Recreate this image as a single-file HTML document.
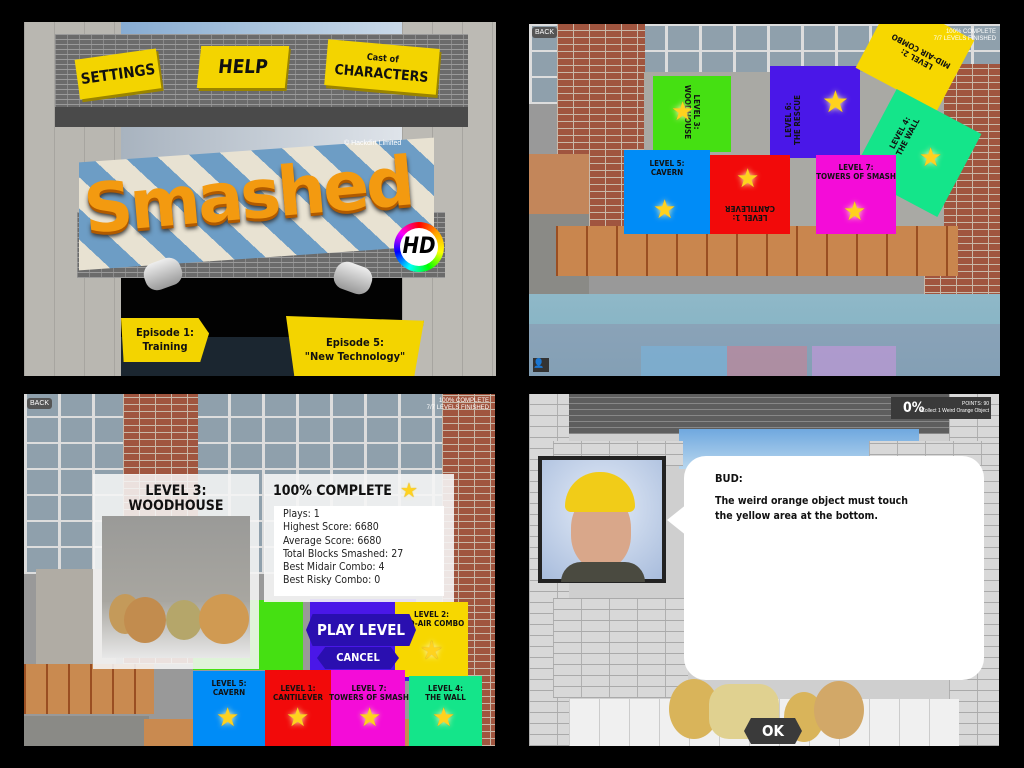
<!DOCTYPE html>
<html><head><meta charset="utf-8"><style>
*{margin:0;padding:0;box-sizing:border-box}
body{width:1024px;height:768px;background:#000;position:relative;overflow:hidden;font-family:"Liberation Sans",sans-serif}
.p{position:absolute;overflow:hidden}
.a{position:absolute}
.c{font-family:"DejaVu Sans Condensed","DejaVu Sans",sans-serif;font-weight:bold}
.brick{background-color:#6b6b6b;background-image:repeating-linear-gradient(0deg,#9a9a9a 0 1px,transparent 1px 5px),repeating-linear-gradient(90deg,#8a8a8a 0 1px,transparent 1px 12px)}
.rbrick{background-color:#a0553f;background-image:repeating-linear-gradient(0deg,#c9b8a8 0 1px,transparent 1px 7px),repeating-linear-gradient(90deg,#c9b8a8 0 1px,transparent 1px 16px)}
.wbrick{background-color:#d8d8d8;background-image:repeating-linear-gradient(0deg,#aaa 0 1px,transparent 1px 11px),repeating-linear-gradient(90deg,#b0b0b0 0 1px,transparent 1px 28px)}
.ys{background:#f3d400;color:#111;text-align:center;box-shadow:2px 3px 0 #9a8400;white-space:nowrap}
.blk{position:absolute;font-family:"DejaVu Sans Condensed","DejaVu Sans",sans-serif;font-weight:bold;font-size:8px;color:#111;text-align:center;line-height:9px;white-space:nowrap}
.star{position:absolute;color:#ffd21e;font-size:26px;line-height:26px;text-shadow:0 0 6px #fff8b0,0 0 1px #a06800}
.win{background-color:#8fa0ac;background-image:repeating-linear-gradient(90deg,#ddd 0 3px,transparent 3px 34px),repeating-linear-gradient(0deg,#ddd 0 2px,transparent 2px 26px)}
</style></head><body>

<!-- TOP LEFT -->
<div class="p" style="left:24px;top:22px;width:472px;height:354px;background:#7fa6c8">
  <div class="a" style="left:0;top:0;width:472px;height:14px;background:linear-gradient(90deg,#6f9ccc,#a9c3dc,#dfe7ef)"></div>
  <div class="a" style="left:0;top:0;width:97px;height:354px;background:#b9b7b1;background-image:repeating-linear-gradient(90deg,#a7a5a0 0 1px,transparent 1px 30px)"></div>
  <div class="a" style="left:378px;top:0;width:94px;height:354px;background:#bcbab4;background-image:repeating-linear-gradient(90deg,#a7a5a0 0 1px,transparent 1px 30px)"></div>
  <div class="a" style="left:97px;top:105px;width:281px;height:40px;background:linear-gradient(90deg,#a8b3bf,#dfe4ea)"></div>
  <div class="a" style="left:97px;top:255px;width:281px;height:99px;background:#020202"></div>
  <div class="a" style="left:97px;top:315px;width:281px;height:39px;background:#1b2630"></div>
  <div class="a brick" style="left:31px;top:12px;width:413px;height:76px"></div>
  <div class="a" style="left:31px;top:85px;width:413px;height:20px;background:#4a4a4a"></div>
  <div class="a ys c" style="left:53px;top:32px;width:82px;height:40px;transform:rotate(-8deg);font-size:15px;line-height:40px">SETTINGS</div>
  <div class="a ys c" style="left:175px;top:24px;width:88px;height:42px;transform:skewX(-6deg);font-size:19px;line-height:42px">HELP</div>
  <div class="a ys c" style="left:302px;top:22px;width:112px;height:46px;transform:rotate(5deg);font-size:14px;line-height:15px;padding-top:6px"><span style="font-size:9px">Cast of</span><br>CHARACTERS</div>
  <div class="a brick" style="left:53px;top:190px;width:368px;height:66px"></div>
  <div class="a" style="left:55px;top:128px;width:355px;height:108px;transform:skewY(-4deg);background:repeating-linear-gradient(45deg,#e8e2d2 0 22px,#6d9dc5 22px 44px)"></div>
  <div class="a" style="left:60px;top:134px;width:340px;height:90px;font:bold 68px 'DejaVu Sans',sans-serif;color:#f39a10;text-shadow:0 3px 0 #b05a00,0 5px 4px #333;transform:rotate(-5deg);letter-spacing:-3px">Smashed</div>
  <div class="a" style="left:370px;top:200px;width:50px;height:50px;border-radius:50%;background:conic-gradient(red,orange,yellow,lime,cyan,blue,magenta,red)"></div>
  <div class="a" style="left:376px;top:206px;width:38px;height:38px;border-radius:50%;background:#fff;font:bold italic 22px 'DejaVu Sans Condensed',sans-serif;line-height:38px;text-align:center;color:#000">HD</div>
  <div class="a" style="left:320px;top:118px;font-size:7px;color:#fff">© Hackdirt Limited</div>
  <div class="a" style="left:120px;top:238px;width:38px;height:28px;border-radius:12px;background:linear-gradient(#eee,#999);transform:rotate(-20deg)"></div>
  <div class="a" style="left:310px;top:242px;width:38px;height:28px;border-radius:12px;background:linear-gradient(#eee,#999);transform:rotate(20deg)"></div>
  <div class="a ys c" style="left:97px;top:296px;width:88px;height:44px;font-size:11px;line-height:14px;padding-top:8px;clip-path:polygon(0 0,88% 0,100% 35%,90% 100%,3% 100%)">Episode 1:<br>Training</div>
  <div class="a ys c" style="left:262px;top:294px;width:138px;height:60px;font-size:11px;line-height:14px;padding-top:20px;clip-path:polygon(0 0,100% 8%,93% 100%,6% 100%)">Episode 5:<br>"New Technology"</div>
</div>

<!-- TOP RIGHT -->
<div class="p" style="left:529px;top:24px;width:471px;height:352px;background:#999">
  <div class="a win" style="left:0;top:0;width:471px;height:80px"></div>
  <div class="a rbrick" style="left:28px;top:0;width:88px;height:210px"></div>
  <div class="a rbrick" style="left:395px;top:40px;width:76px;height:250px"></div>
  <div class="a" style="left:115px;top:48px;width:300px;height:180px;background:#a9a9a4"></div>
  <div class="a" style="left:0;top:130px;width:60px;height:60px;background:#c3865a"></div>
  <div class="a" style="left:0;top:190px;width:60px;height:90px;background:#8a8a86"></div>
  <div class="a" style="left:160px;top:75px;font:bold 50px 'DejaVu Sans',sans-serif;color:#111">D</div>
  <div class="a" style="left:0;top:270px;width:471px;height:82px;background:linear-gradient(#8fb8c8,#7fb0c0)"></div>
  <div class="a" style="left:27px;top:202px;width:402px;height:50px;background:#c9864e;background-image:repeating-linear-gradient(90deg,#9a4e22 0 2px,transparent 2px 30px)"></div>
  <div class="a" style="left:0;top:300px;width:471px;height:52px;background:rgba(140,130,160,.35)"></div>
  <div class="a" style="left:112px;top:322px;width:86px;height:30px;background:rgba(120,180,220,.6)"></div>
  <div class="a" style="left:198px;top:322px;width:80px;height:30px;background:rgba(200,130,150,.6)"></div>
  <div class="a" style="left:283px;top:322px;width:84px;height:30px;background:rgba(200,150,220,.6)"></div>
  <div class="a" style="left:124px;top:52px;width:78px;height:76px;background:#45e012"></div>
  <div class="blk" style="left:163px;top:88px;width:60px;transform:translate(-30px,-9px) rotate(90deg)">LEVEL 3:<br>WOODHOUSE</div>
  <div class="star" style="left:142px;top:74px">★</div>
  <div class="a" style="left:241px;top:42px;width:90px;height:92px;background:#4a17e8"></div>
  <div class="blk" style="left:244px;top:96px;width:60px;transform:translate(-10px,-9px) rotate(-90deg)">LEVEL 6:<br>THE RESCUE</div>
  <div class="star" style="left:293px;top:66px;font-size:30px">★</div>
  <div class="a" style="left:340px;top:-10px;width:92px;height:80px;background:#f7d700;transform:rotate(28deg)"></div>
  <div class="blk" style="left:355px;top:22px;transform:rotate(208deg);width:70px">LEVEL 2:<br>MID-AIR COMBO</div>
  <div class="a" style="left:340px;top:82px;width:96px;height:94px;background:#14e58a;transform:rotate(28deg)"></div>
  <div class="blk" style="left:345px;top:102px;transform:rotate(-62deg);width:60px">LEVEL 4:<br>THE WALL</div>
  <div class="star" style="left:390px;top:120px">★</div>
  <div class="a" style="left:95px;top:126px;width:86px;height:84px;background:#008cf7"></div>
  <div class="blk" style="left:95px;top:135px;width:86px">LEVEL 5:<br>CAVERN</div>
  <div class="star" style="left:124px;top:172px">★</div>
  <div class="a" style="left:181px;top:131px;width:80px;height:79px;background:#f20a0a"></div>
  <div class="star" style="left:207px;top:141px">★</div>
  <div class="blk" style="left:181px;top:180px;width:80px;transform:rotate(180deg)">LEVEL 1:<br>CANTILEVER</div>
  <div class="a" style="left:287px;top:131px;width:80px;height:79px;background:#f40cd8"></div>
  <div class="blk" style="left:283px;top:139px;width:88px">LEVEL 7:<br>TOWERS OF SMASH</div>
  <div class="star" style="left:314px;top:174px">★</div>
  <div class="a" style="left:3px;top:3px;font-size:7px;color:#fff;background:#555;padding:2px 3px;border-radius:3px">BACK</div>
  <div class="a" style="right:4px;top:5px;font-size:6px;color:#fff;text-align:right;line-height:7px">100% COMPLETE<br>7/7 LEVELS FINISHED</div>
  <div class="a" style="left:4px;top:334px;width:16px;height:14px;background:#333;color:#fff;font-size:9px">👤</div>
</div>

<!-- BOTTOM LEFT -->
<div class="p" style="left:24px;top:394px;width:471px;height:352px;background:#999">
  <div class="a win" style="left:0;top:0;width:471px;height:180px"></div>
  <div class="a rbrick" style="left:99px;top:0;width:75px;height:270px"></div>
  <div class="a rbrick" style="left:418px;top:0;width:53px;height:352px"></div>
  <div class="a" style="left:12px;top:175px;width:80px;height:100px;background:#b0aca4"></div>
  <div class="a" style="left:0;top:270px;width:130px;height:50px;background:#c98a50;background-image:repeating-linear-gradient(90deg,#9a4e22 0 2px,transparent 2px 22px)"></div>
  <div class="a" style="left:0;top:322px;width:125px;height:30px;background:#8a8a86"></div>
  <div class="a" style="left:120px;top:325px;width:300px;height:27px;background:#c98a50"></div>
  <div class="a" style="left:169px;top:206px;width:110px;height:70px;background:#45e012"></div>
  <div class="a" style="left:286px;top:205px;width:106px;height:82px;background:#4a17e8"></div>
  <div class="a" style="left:371px;top:208px;width:73px;height:75px;background:#f7d700"></div>
  <div class="blk" style="left:371px;top:216px;width:73px">LEVEL 2:<br>MID-AIR COMBO</div>
  <div class="star" style="left:396px;top:243px">★</div>
  <div class="a" style="left:169px;top:277px;width:72px;height:75px;background:#008cf7"></div>
  <div class="blk" style="left:169px;top:285px;width:72px">LEVEL 5:<br>CAVERN</div>
  <div class="star" style="left:192px;top:310px">★</div>
  <div class="a" style="left:241px;top:276px;width:66px;height:76px;background:#f20a0a"></div>
  <div class="blk" style="left:241px;top:290px;width:66px">LEVEL 1:<br>CANTILEVER</div>
  <div class="star" style="left:262px;top:310px">★</div>
  <div class="a" style="left:307px;top:276px;width:74px;height:76px;background:#f40cd8"></div>
  <div class="blk" style="left:305px;top:290px;width:80px">LEVEL 7:<br>TOWERS OF SMASH</div>
  <div class="star" style="left:334px;top:310px">★</div>
  <div class="a" style="left:385px;top:282px;width:73px;height:70px;background:#14e58a"></div>
  <div class="blk" style="left:385px;top:290px;width:73px">LEVEL 4:<br>THE WALL</div>
  <div class="star" style="left:408px;top:310px">★</div>
  <div class="a c" style="left:282px;top:220px;width:110px;height:32px;background:#2a0fb0;clip-path:polygon(6% 0,94% 0,100% 50%,94% 100%,6% 100%,0 50%);color:#fff;font-size:15px;text-align:center;line-height:32px;white-space:nowrap">PLAY LEVEL</div>
  <div class="a c" style="left:293px;top:253px;width:82px;height:22px;background:#2a0fb0;clip-path:polygon(10% 0,90% 0,100% 50%,90% 100%,10% 100%,0 50%);color:#fff;font-size:11px;text-align:center;line-height:22px">CANCEL</div>
  <div class="a" style="left:69px;top:80px;width:166px;height:195px;background:rgba(245,245,245,.88)"></div>
  <div class="a c" style="left:69px;top:90px;width:166px;text-align:center;font-size:14px;line-height:15px;color:#111">LEVEL 3:<br>WOODHOUSE</div>
  <div class="a" style="left:78px;top:122px;width:148px;height:142px;background:linear-gradient(#9a9a98,#a8a6a0 60%,#e8e8e8)"></div>
  <div class="a" style="left:85px;top:200px;width:32px;height:40px;border-radius:50%;background:#c49a5a"></div>
  <div class="a" style="left:100px;top:203px;width:42px;height:46px;border-radius:50%;background:#c28c4e"></div>
  <div class="a" style="left:142px;top:206px;width:36px;height:40px;border-radius:50%;background:#b5a66a"></div>
  <div class="a" style="left:175px;top:200px;width:50px;height:50px;border-radius:50%;background:#d09a52"></div>
  <div class="a" style="left:240px;top:80px;width:190px;height:128px;background:rgba(245,245,245,.9)"></div>
  <div class="a c" style="left:249px;top:89px;font-size:14px;color:#111">100% COMPLETE</div>
  <div class="star" style="left:376px;top:84px;font-size:20px">★</div>
  <div class="a" style="left:250px;top:112px;width:170px;height:90px;background:#fff"></div>
  <div class="a" style="left:259px;top:114px;font:10.5px 'DejaVu Sans Condensed','Liberation Sans',sans-serif;line-height:13.3px;color:#222">Plays: 1<br>Highest Score: 6680<br>Average Score: 6680<br>Total Blocks Smashed: 27<br>Best Midair Combo: 4<br>Best Risky Combo: 0</div>
  <div class="a" style="left:3px;top:4px;font-size:7px;color:#fff;background:#555;padding:2px 3px;border-radius:3px">BACK</div>
  <div class="a" style="right:6px;top:4px;font-size:6px;color:#fff;text-align:right;line-height:7px">100% COMPLETE<br>7/7 LEVELS FINISHED</div>
</div>

<!-- BOTTOM RIGHT -->
<div class="p" style="left:529px;top:394px;width:470px;height:352px;background:#cfcfcf">
  <div class="a" style="left:0;top:0;width:470px;height:40px;background:#5e5e5e;background-image:repeating-linear-gradient(0deg,#888 0 1px,transparent 1px 6px)"></div>
  <div class="a" style="left:150px;top:35px;width:240px;height:40px;background:linear-gradient(#6fa8df,#b9d7ee)"></div>
  <div class="a wbrick" style="left:0;top:0;width:40px;height:352px"></div>
  <div class="a wbrick" style="left:420px;top:0;width:50px;height:352px"></div>
  <div class="a wbrick" style="left:24px;top:47px;width:130px;height:25px"></div>
  <div class="a wbrick" style="left:340px;top:47px;width:130px;height:25px"></div>
  <div class="a wbrick" style="left:24px;top:204px;width:135px;height:100px"></div>
  <div class="a" style="left:40px;top:305px;width:390px;height:47px;background:#f0f0f0;background-image:repeating-linear-gradient(90deg,#ccc 0 1px,transparent 1px 30px)"></div>
  <div class="a" style="left:140px;top:285px;width:50px;height:60px;border-radius:50%;background:#d9b45a"></div>
  <div class="a" style="left:180px;top:290px;width:70px;height:55px;border-radius:20px;background:#e0d190"></div>
  <div class="a" style="left:255px;top:298px;width:40px;height:50px;border-radius:50%;background:#d9b45a"></div>
  <div class="a" style="left:285px;top:287px;width:50px;height:58px;border-radius:50%;background:#d2a868"></div>
  <div class="a c" style="left:215px;top:324px;width:58px;height:26px;background:#3a3a3a;clip-path:polygon(12% 0,88% 0,100% 50%,88% 100%,12% 100%,0 50%);color:#fff;font-size:15px;text-align:center;line-height:26px">OK</div>
  <div class="a" style="left:155px;top:62px;width:300px;height:224px;background:#fff;border-radius:22px"></div>
  <div class="a" style="left:138px;top:110px;width:0;height:0;border-top:16px solid transparent;border-bottom:16px solid transparent;border-right:20px solid #fff"></div>
  <div class="a c" style="left:186px;top:78px;font-size:11px;color:#111">BUD:</div>
  <div class="a c" style="left:186px;top:100px;font-size:10.5px;line-height:15px;color:#111">The weird orange object must touch<br>the yellow area at the bottom.</div>
  <div class="a" style="left:9px;top:62px;width:128px;height:127px;background:#222;padding:4px"><div style="width:100%;height:100%;background:radial-gradient(circle at 50% 40%,#e4ecf8,#a8bcdc)"></div></div>
  <div class="a" style="left:42px;top:100px;width:60px;height:75px;border-radius:45%;background:#d9a78a"></div>
  <div class="a" style="left:32px;top:168px;width:84px;height:20px;background:#4a4a40;border-radius:20px 20px 0 0"></div>
  <div class="a" style="left:36px;top:78px;width:70px;height:40px;border-radius:35px 35px 6px 6px;background:#f1cc18"></div>
  <div class="a" style="left:362px;top:3px;width:100px;height:22px;background:#3a3a3a"></div>
  <div class="a c" style="left:374px;top:6px;font-size:14px;color:#fff">0%</div>
  <div class="a" style="right:10px;top:7px;font-size:5px;color:#fff;text-align:right;line-height:7px">POINTS: 90<br>Collect 1 Weird Orange Object</div>
</div>
</body></html>
